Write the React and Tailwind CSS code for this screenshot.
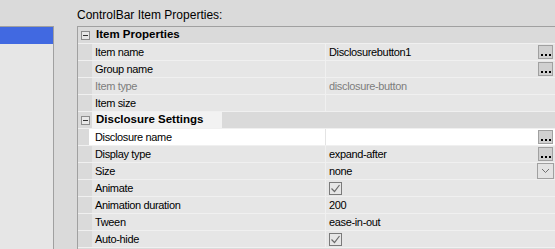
import React from 'react';

const font = { fontFamily: '"Liberation Sans", Arial, sans-serif' };

const MinusBox = () => (
  <div className="w-[9px] h-[9px] border border-[#8c8c8c] bg-[#e8e8e8] flex items-center justify-center">
    <div className="w-[5px] h-[1px] bg-[#333]" />
  </div>
);

const DotsButton = () => (
  <div className="w-[15px] h-[14px] border border-[#a0a0a0] bg-[#d0d0d0] flex items-end justify-center gap-[2px] pb-[2px] mr-[2px]">
    <span className="w-[2px] h-[2px] bg-black" />
    <span className="w-[2px] h-[2px] bg-black" />
    <span className="w-[2px] h-[2px] bg-black" />
  </div>
);

const DropButton = () => (
  <div className="w-[17px] h-[16px] border border-[#a0a0a0] bg-[#e3e3e3] flex items-center justify-center mr-[1px]">
    <svg width="9" height="6" viewBox="0 0 9 6">
      <polyline points="1,1 4.5,4.5 8,1" fill="none" stroke="#707070" strokeWidth="1" />
    </svg>
  </div>
);

const Check = () => (
  <div className="w-[13px] h-[13px] border border-[#7a7a7a] flex items-center justify-center">
    <svg width="11" height="11" viewBox="0 0 11 11">
      <polyline points="1.5,5.5 4.5,8.5 9.5,2" fill="none" stroke="#6a6a6a" strokeWidth="1.2" />
    </svg>
  </div>
);

const Category = ({ title, highlight }) => (
  <div className="flex h-[17px] bg-[#dadada] border-b border-[#f0f0f0]">
    <div className="w-[14px] flex items-center pl-[3px]">
      <MinusBox />
    </div>
    <div
      className={`flex items-center pl-[4px] pr-[8px] text-[11.5px] tracking-normal font-bold text-black ${
        highlight ? 'bg-[#f2f2f2] w-[130px]' : ''
      }`}
    >
      {title}
    </div>
  </div>
);

const Row = ({ label, value, gray, selected, button }) => (
  <div className="flex h-[17px] border-b border-[#f0f0f0]">
    <div className={`${selected ? 'w-[11px]' : 'w-[14px]'} bg-[#dadada]`} />
    <div
      className={`${selected ? 'w-[236px] pl-[6px]' : 'w-[233px] pl-[3px]'} flex items-center ${
        selected ? 'bg-white' : 'bg-[#e6e6e6]'
      } ${gray ? 'text-[#7d7d7d]' : 'text-black'}`}
    >
      {label}
    </div>
    <div
      className={`flex-1 flex items-center justify-between pl-[3px] border-l ${
        selected ? 'bg-white border-[#e4e4e4]' : 'bg-[#e6e6e6] border-[#f0f0f0]'
      } ${gray ? 'text-[#7d7d7d]' : 'text-black'}`}
    >
      <span>{value}</span>
      {button === 'dots' && <DotsButton />}
      {button === 'drop' && <DropButton />}
    </div>
  </div>
);

const App = () => {
  return (
    <div
      className="w-[555px] h-[249px] bg-[#dadada] flex overflow-hidden text-[11px] tracking-[-0.35px]"
      style={font}
    >
      {/* left list */}
      <div className="w-[54px] mt-[26px] border-t border-r border-[#a0a0a0] bg-[#e6e6e6]">
        <div className="h-[17px] bg-[#4169e1]" />
      </div>

      <div className="flex-1 ml-[23px] flex flex-col">
        <div className="h-[26px] pt-[9px] text-[12px] tracking-normal text-black leading-none">
          ControlBar Item Properties:
        </div>
        <div className="flex-1 border-t border-l border-[#a0a0a0] flex flex-col">
          <Category title="Item Properties" />
          <Row label="Item name" value="Disclosurebutton1" button="dots" />
          <Row label="Group name" value="" button="dots" />
          <Row label="Item type" value="disclosure-button" gray />
          <Row label="Item size" value="" />
          <Category title="Disclosure Settings" highlight />
          <Row label="Disclosure name" value="" selected button="dots" />
          <Row label="Display type" value="expand-after" button="dots" />
          <Row label="Size" value="none" button="drop" />
          <Row label="Animate" value={<Check />} />
          <Row label="Animation duration" value="200" />
          <Row label="Tween" value="ease-in-out" />
          <Row label="Auto-hide" value={<Check />} />
        </div>
      </div>
    </div>
  );
};

export default App;
